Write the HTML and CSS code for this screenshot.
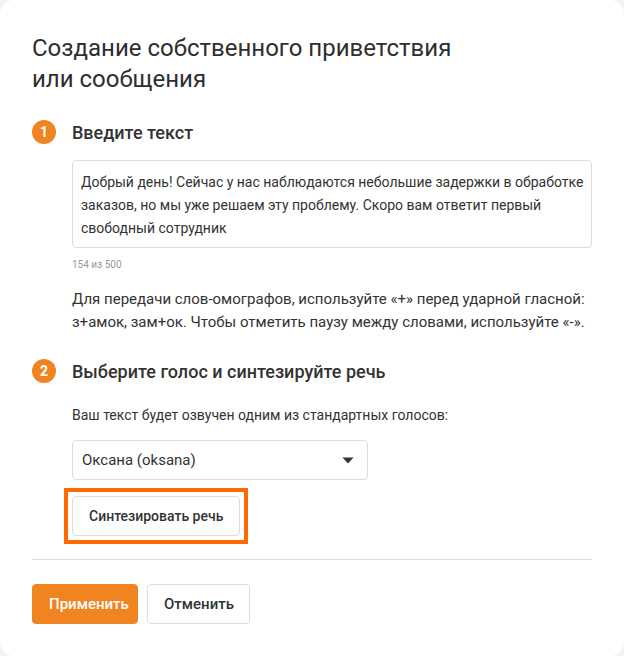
FILE: index.html
```html
<!DOCTYPE html>
<html lang="ru">
<head>
<meta charset="utf-8">
<link rel="stylesheet" href="styles.css">
</head>
<body>
<div class="card">
  <h1 class="title">Создание собственного приветствия<br>или сообщения</h1>

  <div class="step">
    <span class="num">1</span>
    <h2 class="step-title">Введите текст</h2>
  </div>
  <div class="step-body">
    <div class="textarea">Добрый день! Сейчас у нас наблюдаются небольшие задержки в обработке заказов, но мы уже решаем эту проблему. Скоро вам ответит первый свободный сотрудник</div>
    <div class="counter">154 из 500</div>
    <p class="hint">Для передачи слов-омографов, используйте «+» перед ударной гласной: з+амок, зам+ок. Чтобы отметить паузу между словами, используйте «-».</p>
  </div>

  <div class="step step2">
    <span class="num">2</span>
    <h2 class="step-title">Выберите голос и синтезируйте речь</h2>
  </div>
  <div class="step-body">
    <p class="lead">Ваш текст будет озвучен одним из стандартных голосов:</p>
    <div class="select">
      <span>Оксана (oksana)</span>
      <svg class="caret" width="12" height="7" viewBox="0 0 12 7"><path d="M0.5 0.5h11L6 6.5z" fill="#333"/></svg>
    </div>
    <button class="btn btn-synth">Синтезировать речь</button>
  </div>

  <hr class="divider">

  <div class="actions">
    <button class="btn btn-primary">Применить</button>
    <button class="btn btn-default">Отменить</button>
  </div>
</div>
</body>
</html>
```
FILE: styles.css
```css
* { box-sizing: border-box; }
html, body { margin: 0; padding: 0; }
body {
  background: #f2f2f2;
  font-family: Roboto, "Noto Sans", Arial, sans-serif;
  color: #333;
}
.card {
  background: #fff;
  width: 624px;
  height: 656px;
  border-radius: 14px;
  padding: 33px 32px 0 32px;
}
.title {
  margin: 0;
  font-size: 24px;
  line-height: 31px;
  font-weight: 400;
  color: #2e2e2e;
}
.step {
  display: flex;
  align-items: center;
  margin-top: 25px;
  height: 24px;
}
.step2 { margin-top: 25px; }
.num {
  width: 24px;
  height: 24px;
  border-radius: 50%;
  background: #f08421;
  color: #fff;
  font-size: 14px;
  font-weight: 700;
  display: flex;
  align-items: center;
  justify-content: center;
  margin-right: 16px;
}
.step-title {
  margin: 0;
  font-size: 18px;
  font-weight: 500;
  color: #333;
}
.step-body {
  padding-left: 40px;
}
.textarea {
  margin-top: 16px;
  border: 1px solid #ddd;
  border-radius: 4px;
  padding: 10px 2px 9px 8px;
  font-size: 14px;
  line-height: 23px;
  color: #333;
  height: 88px;
}
.counter {
  margin-top: 11px;
  font-size: 10px;
  line-height: 12px;
  color: #999;
}
.hint {
  margin: 17px 0 0 0;
  font-size: 15px;
  line-height: 23px;
  color: #333;
}
.lead {
  margin: 22px 0 0 0;
  font-size: 14px;
  line-height: 20px;
  color: #333;
}
.select {
  margin-top: 15px;
  width: 296px;
  height: 40px;
  border: 1px solid #ddd;
  border-radius: 4px;
  display: flex;
  align-items: center;
  justify-content: space-between;
  padding: 0 13px 0 9px;
  font-size: 15px;
  color: #333;
}
.caret { display: block; }
.btn {
  font-family: inherit;
  height: 40px;
  border-radius: 4px;
  font-size: 15px;
  font-weight: 500;
  padding: 0 16px;
  cursor: pointer;
  white-space: nowrap;
}
.btn-synth {
  position: relative;
  display: block;
  margin-top: 16px;
  font-size: 14px;
  background: #fff;
  border: 1px solid #ddd;
  color: #333;
}
.btn-synth::after {
  content: "";
  position: absolute;
  left: -9px;
  top: -9px;
  right: -9px;
  bottom: -9px;
  border: 4px solid #ff6a00;
  pointer-events: none;
}
.divider {
  margin: 23px 0 0 0;
  border: 0;
  border-top: 1px solid #dcdcdc;
}
.actions {
  display: flex;
  gap: 9px;
  margin-top: 24px;
}
.btn-primary {
  background: #f08421;
  border: 1px solid #f08421;
  color: #fff;
  width: 106px;
}
.btn-default {
  background: #fff;
  border: 1px solid #ddd;
  color: #333;
  width: 103px;
}
```
